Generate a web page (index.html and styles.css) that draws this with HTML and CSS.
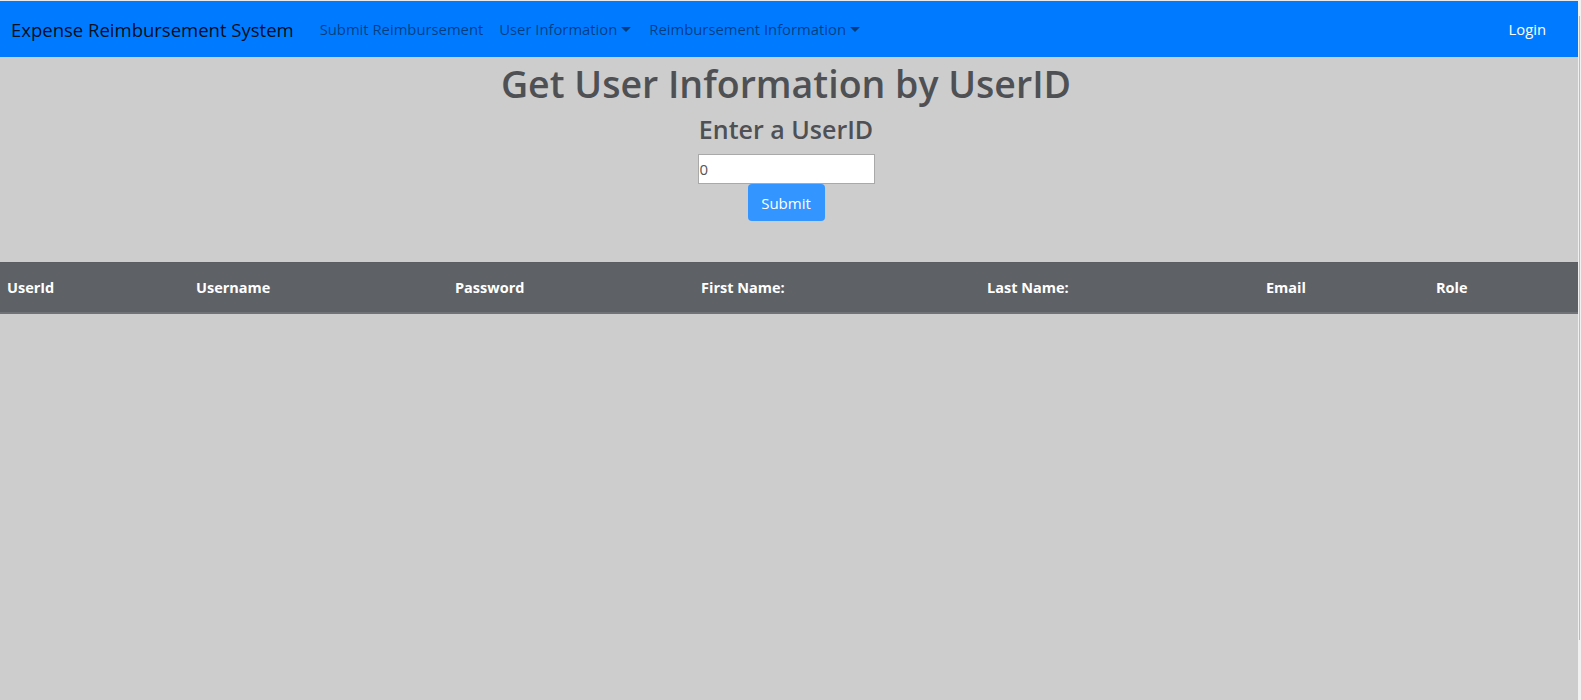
FILE: index.html
```html
<!DOCTYPE html>
<html lang="en">
<head>
<meta charset="utf-8">
<title>Expense Reimbursement System</title>
<link rel="stylesheet" href="styles.css">
</head>
<body>
<div class="page">
  <div class="main">
    <nav class="navbar">
      <a class="brand" href="#">Expense Reimbursement System</a>
      <ul class="nav">
        <li><a class="nav-link" href="#">Submit Reimbursement</a></li>
        <li><a class="nav-link dropdown" href="#">User Information</a></li>
        <li><a class="nav-link dropdown" href="#">Reimbursement Information</a></li>
      </ul>
      <a class="login" href="#">Login</a>
    </nav>
    <section class="content">
      <h1 class="title">Get User Information by UserID</h1>
      <h3 class="subtitle">Enter a UserID</h3>
      <input class="uid" type="number" value="0">
      <button class="btn">Submit</button>
    </section>
    <table class="users">
      <colgroup>
        <col class="c1"><col class="c2"><col class="c3"><col class="c4"><col class="c5"><col class="c6"><col class="c7">
      </colgroup>
      <thead>
        <tr>
          <th>UserId</th>
          <th>Username</th>
          <th>Password</th>
          <th>First Name:</th>
          <th>Last Name:</th>
          <th>Email</th>
          <th>Role</th>
        </tr>
      </thead>
      <tbody></tbody>
    </table>
  </div>
  <div class="scrollbar"><div class="thumb"></div></div>
</div>
</body>
</html>
```
FILE: styles.css
```css
* { box-sizing: border-box; }
html, body { margin: 0; padding: 0; }
body {
  font-family: "Open Sans", "Noto Sans", "Liberation Sans", sans-serif;
  background: #cdcdcd;
  height: 700px;
  overflow: hidden;
}
.page {
  display: flex;
  height: 700px;
}
.main {
  flex: 1;
  background: #cdcdcd;
  border-top: 1px solid #e9e9e9;
}
.scrollbar {
  width: 3px;
  background: #f1f1f1;
  padding: 16px 1px 60px 1px;
}
.thumb {
  height: 100%;
  background: #bdbdbd;
  width: 1px;
}
.navbar {
  display: flex;
  align-items: center;
  height: 56px;
  background: #007bff;
  padding: 0 16px 0 11px;
}
.brand {
  color: rgba(0,0,0,0.9);
  font-size: 18.5px;
  text-decoration: none;
  margin-right: 18px;
}
.nav {
  display: flex;
  list-style: none;
  margin: 0;
  padding: 0;
  flex: 1;
}
.nav-link {
  display: block;
  padding: 8px 8px;
  color: rgba(0,0,0,0.5);
  font-size: 14.8px;
  text-decoration: none;
}
.nav li:nth-child(3) .nav-link { padding-left: 10px; }
.dropdown::after {
  content: "";
  display: inline-block;
  margin-left: 4px;
  vertical-align: 3px;
  border-top: 5px solid;
  border-left: 5px solid transparent;
  border-right: 5px solid transparent;
}
.login {
  color: #fff;
  font-size: 14.8px;
  text-decoration: none;
  padding: 8px 16px 8px 8px;
}
.content {
  display: flex;
  flex-direction: column;
  align-items: center;
  padding: 0 6px 41px 0;
}
.title {
  margin: 4px 0 0 0;
  font-size: 37.5px;
  font-weight: 600;
  color: #4e5054;
  line-height: 1.2;
}
.subtitle {
  margin: 8px 0 0 0;
  font-size: 25px;
  font-weight: 600;
  color: #4e5054;
  line-height: 1.2;
}
.uid {
  margin-top: 10px;
  width: 177px;
  height: 30px;
  border: 1px solid #a9a9a9;
  background: #fff;
  font-family: inherit;
  font-size: 15px;
  color: #555;
  padding: 0 1px;
  outline: none;
}
.uid::-webkit-inner-spin-button { display: none; }
.btn {
  margin-top: 0;
  width: 77px;
  height: 37px;
  background: #3395ff;
  color: #fff;
  border: none;
  border-radius: 4px;
  font-family: inherit;
  font-size: 15px;
}
.users {
  width: 100%;
  border-collapse: collapse;
  table-layout: fixed;
}
.users th {
  background: #5e6166;
  color: #fff;
  text-align: left;
  font-size: 14.5px;
  font-weight: 700;
  height: 50px;
  padding: 0 7px;
  border-top: 1px solid #5a5d62;
  border-bottom: 2px solid #6f7378;
}
.c1 { width: 189px; }
.c2 { width: 259px; }
.c3 { width: 246px; }
.c4 { width: 286px; }
.c5 { width: 279px; }
.c6 { width: 170px; }
.c7 { width: auto; }
```
